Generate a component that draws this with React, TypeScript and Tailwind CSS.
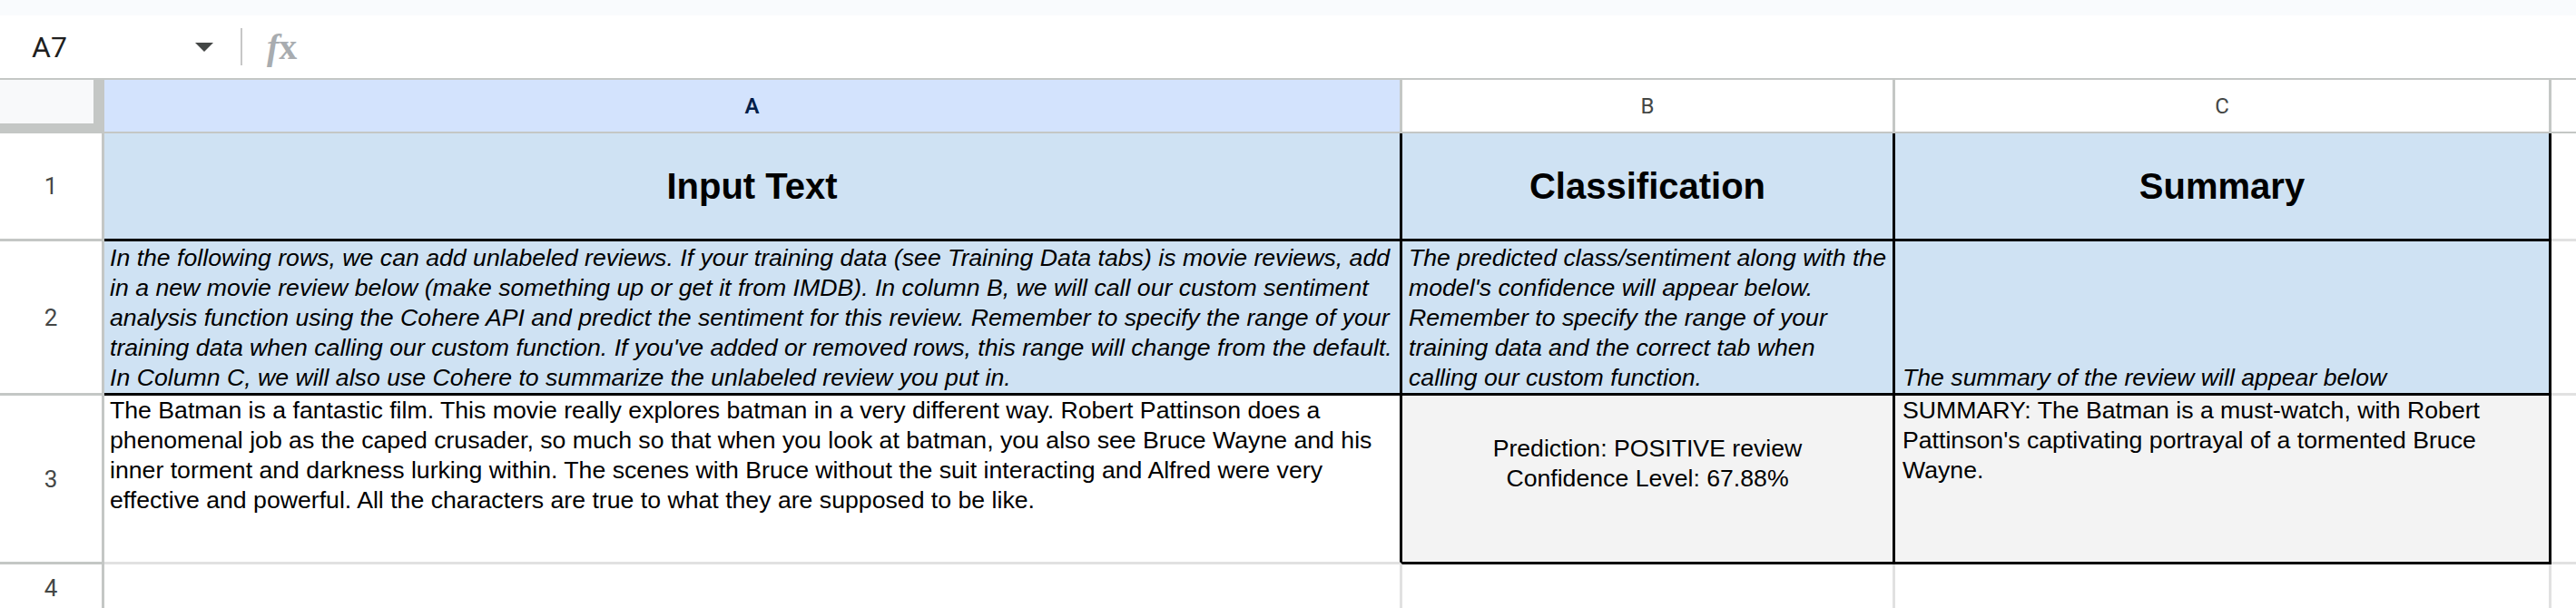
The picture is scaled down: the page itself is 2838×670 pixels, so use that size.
import React from "react";

const introLines = [
  "In the following rows, we can add unlabeled reviews. If your training data (see Training Data tabs) is movie reviews, add",
  "in a new movie review below (make something up or get it from IMDB). In column B, we will call our custom sentiment",
  "analysis function using the Cohere API and predict the sentiment for this review. Remember to specify the range of your",
  "training data when calling our custom function. If you've added or removed rows, this range will change from the default.",
  "In Column C, we will also use Cohere to summarize the unlabeled review you put in.",
];

const classifyLines = [
  "The predicted class/sentiment along with the",
  "model's confidence will appear below.",
  "Remember to specify the range of your",
  "training data and the correct tab when",
  "calling our custom function.",
];

const reviewLines = [
  "The Batman is a fantastic film. This movie really explores batman in a very different way. Robert Pattinson does a",
  "phenomenal job as the caped crusader, so much so that when you look at batman, you also see Bruce Wayne and his",
  "inner torment and darkness lurking within. The scenes with Bruce without the suit interacting and Alfred were very",
  "effective and powerful. All the characters are true to what they are supposed to be like.",
];

const summaryLines = [
  "SUMMARY: The Batman is a must-watch, with Robert",
  "Pattinson's captivating portrayal of a tormented Bruce",
  "Wayne.",
];

function Lines({ lines }: { lines: string[] }) {
  return (
    <>
      {lines.map((line, i) => (
        <div key={i} className="whitespace-nowrap">
          {line}
        </div>
      ))}
    </>
  );
}

function RowHead({ n, border = "border-b-[3px]" }: { n: number; border?: string }) {
  return (
    <div
      className={`w-[115px] shrink-0 h-full flex items-center justify-center not-italic font-normal border-r-[3px] border-[#c4c7c5] ${border} bg-white text-[26px] leading-none text-[#444746] font-['Roboto',sans-serif]`}
    >
      {n}
    </div>
  );
}

export default function App() {
  return (
    <div className="w-[2838px] h-[670px] overflow-hidden bg-white font-['Liberation_Sans',Arial,sans-serif] text-black">
      {/* top strip */}
      <div className="h-[17px] bg-[#f9fbfd]" />

      {/* formula bar */}
      <div className="h-[71px] flex items-center border-b-2 border-[#c4c7c5] bg-white">
        <div className="w-[265px] h-full flex items-center justify-between pl-[35px] pr-[30px]">
          <span className="text-[32px] text-[#1f1f1f] font-['Roboto',sans-serif] leading-none">A7</span>
          <svg width="20" height="10" viewBox="0 0 20 10">
            <polygon points="0,0 20,0 10,10" fill="#444746" />
          </svg>
        </div>
        <div className="w-[2px] h-[41px] bg-[#c7c7c7]" />
        <div className="ml-[27px] flex items-baseline text-[#a8acb0] font-['Liberation_Serif',serif] font-bold text-[40px] leading-none">
          <span className="italic">f</span>
          <span>x</span>
        </div>
      </div>

      {/* column headers */}
      <div className="flex h-[59px] border-b-2 border-[#c4c7c5] text-[24px] font-['Roboto',sans-serif]">
        <div className="w-[115px] shrink-0 h-full bg-[#c4c7c5]">
          <div className="w-[103px] h-[48px] bg-[#f8f9fa]" />
        </div>
        <div className="w-[1430px] shrink-0 flex items-center justify-center bg-[#d3e3fd] border-r-[3px] border-[#c4c7c5] text-[#041e49] font-semibold">
          A
        </div>
        <div className="w-[543px] shrink-0 flex items-center justify-center border-r-[3px] border-[#c4c7c5] text-[#444746]">
          B
        </div>
        <div className="w-[723px] shrink-0 flex items-center justify-center border-r-[3px] border-[#c4c7c5] text-[#444746]">
          C
        </div>
        <div className="flex-1" />
      </div>

      {/* row 1 */}
      <div className="flex h-[119px]">
        <RowHead n={1} />
        <div className="w-[1430px] shrink-0 flex items-center justify-center text-[40px] font-bold bg-[#cfe2f3] border-r-[3px] border-b-[3px] border-black">
          Input Text
        </div>
        <div className="w-[543px] shrink-0 flex items-center justify-center text-[40px] font-bold bg-[#cfe2f3] border-r-[3px] border-b-[3px] border-black">
          Classification
        </div>
        <div className="w-[723px] shrink-0 flex items-center justify-center text-[40px] font-bold bg-[#cfe2f3] border-r-[3px] border-b-[3px] border-black">
          Summary
        </div>
        <div className="flex-1 border-b-[3px] border-[#e1e1e1]" />
      </div>

      {/* row 2 */}
      <div className="flex h-[170px] text-[26.67px] leading-[33px]">
        <RowHead n={2} />
        <div className="w-[1430px] shrink-0 flex flex-col justify-end px-[6px] italic bg-[#cfe2f3] border-r-[3px] border-b-[3px] border-black">
          <Lines lines={introLines} />
        </div>
        <div className="w-[543px] shrink-0 flex flex-col justify-end px-[7px] italic bg-[#cfe2f3] border-r-[3px] border-b-[3px] border-black">
          <Lines lines={classifyLines} />
        </div>
        <div className="w-[723px] shrink-0 flex flex-col justify-end px-[8px] italic bg-[#cfe2f3] border-r-[3px] border-b-[3px] border-black">
          <div className="whitespace-nowrap">The summary of the review will appear below</div>
        </div>
        <div className="flex-1 border-b-[3px] border-[#e1e1e1]" />
      </div>

      {/* row 3 */}
      <div className="flex h-[186px] text-[26.67px] leading-[33px]">
        <RowHead n={3} />
        <div className="w-[1430px] shrink-0 px-[6px] bg-white border-r-[3px] border-b-[3px] border-r-black border-b-[#e1e1e1]">
          <Lines lines={reviewLines} />
        </div>
        <div className="w-[543px] shrink-0 flex flex-col items-center justify-center pb-[33px] bg-[#f3f3f3] border-r-[3px] border-b-[3px] border-black text-center">
          <div className="whitespace-nowrap">Prediction: POSITIVE review</div>
          <div className="whitespace-nowrap">Confidence Level: 67.88%</div>
        </div>
        <div className="w-[723px] shrink-0 px-[8px] bg-[#f3f3f3] border-r-[3px] border-b-[3px] border-black">
          <Lines lines={summaryLines} />
        </div>
        <div className="flex-1 border-b-[3px] border-[#e1e1e1]" />
      </div>

      {/* row 4 */}
      <div className="flex h-[52px]">
        <RowHead n={4} border="border-b-0" />
        <div className="w-[1430px] shrink-0 border-r-[3px] border-[#e1e1e1]" />
        <div className="w-[543px] shrink-0 border-r-[3px] border-[#e1e1e1]" />
        <div className="w-[723px] shrink-0 border-r-[3px] border-[#e1e1e1]" />
        <div className="flex-1" />
      </div>
    </div>
  );
}
